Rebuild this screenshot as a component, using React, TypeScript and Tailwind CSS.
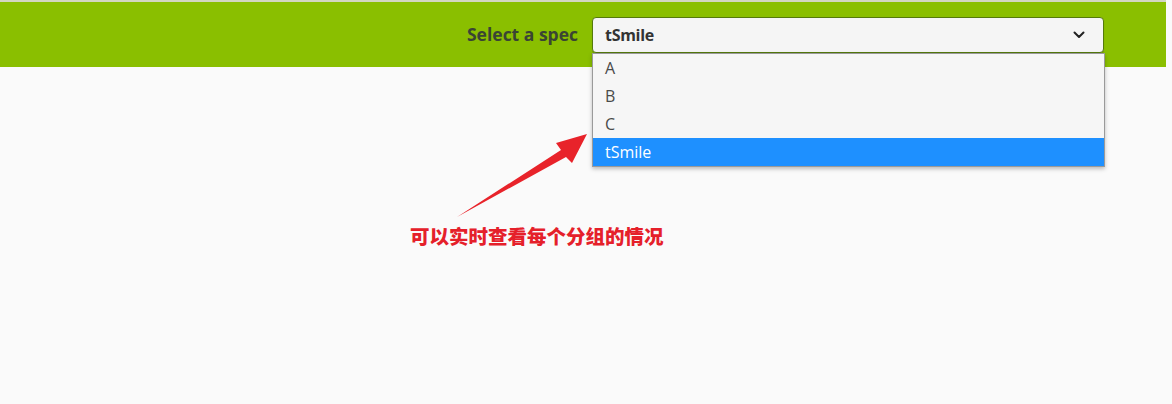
import React from "react";

export default function App() {
  const items = ["A", "B", "C", "tSmile"];
  return (
    <div className="relative w-[1172px] h-[404px] overflow-hidden bg-[#fafafa]" style={{ fontFamily: '"Open Sans", "Noto Sans", sans-serif' }}>
      <div className="h-[2px] bg-[#d3d6c2] mr-[6px]" />
      <header className="h-[65px] bg-[#8abf00] mr-[6px] flex items-center justify-end pr-[62px] gap-[14px]">
        <span className="text-[17.5px] font-bold text-[#3a4434]">Select a spec</span>
        <div className="relative w-[512px]">
          <div className="h-[36px] rounded-[4px] border border-[#557a0c] bg-[#f5f5f5] flex items-center justify-between pl-[12px] pr-[18px] shadow-[0_1px_1px_rgba(0,0,0,0.15)]">
            <span className="text-[16px] font-bold text-[#333] tracking-[-0.3px]">tSmile</span>
            <svg width="12" height="8" viewBox="0 0 12 8" fill="none">
              <path d="M1.5 1.5 L6 6 L10.5 1.5" stroke="#222" strokeWidth="2" strokeLinecap="round" strokeLinejoin="round" />
            </svg>
          </div>
          <ul className="absolute left-0 top-[36px] w-[513px] bg-[#f6f6f6] border border-[#9a9a9a] shadow-[0_2px_4px_rgba(0,0,0,0.25)] z-10">
            {items.map((it) => (
              <li
                key={it}
                className={
                  it === "tSmile"
                    ? "h-[28px] flex items-center pl-[12px] text-[16px] font-normal text-white bg-[#1e90ff]"
                    : "h-[28px] flex items-center pl-[12px] text-[16px] font-normal text-[#4a4a4a]"
                }
              >
                {it}
              </li>
            ))}
          </ul>
        </div>
      </header>
      <svg className="absolute left-0 top-0 pointer-events-none" width="1172" height="404" viewBox="0 0 1172 404">
        <polygon points="587,134 556,143 561,150 457,217 566,157 572,163" fill="#e8232a" />
      </svg>
      <div
        className="absolute left-[410px] top-[226px] text-[19.5px] font-black text-[#e5202a] leading-none"
        style={{ fontFamily: '"Noto Sans CJK SC", sans-serif' }}
      >
        可以实时查看每个分组的情况
      </div>
    </div>
  );
}
